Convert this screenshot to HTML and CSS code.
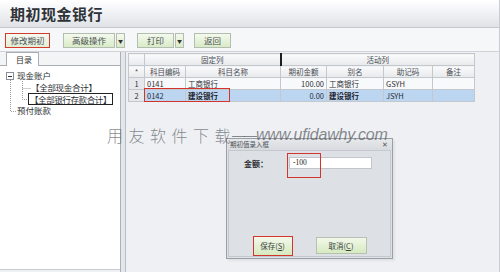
FILE: index.html
```html
<!DOCTYPE html>
<html lang="zh">
<head>
<meta charset="utf-8">
<title>期初现金银行</title>
<link rel="stylesheet" href="styles.css">
</head>
<body>
<div class="app">
  <div class="title">期初现金银行</div>
  <div class="toolbar">
    <div class="btn btn-red w-edit">修改期初</div>
    <div class="split gap-a">
      <div class="btn w-adv">高级操作</div>
      <div class="btn arrow">▼</div>
    </div>
    <div class="split gap-b">
      <div class="btn w-print">打印</div>
      <div class="btn arrow">▼</div>
    </div>
    <div class="btn w-back gap-c">返回</div>
  </div>
  <div class="main">
    <div class="side">
      <div class="tabs"><div class="tab">目录</div></div>
      <div class="tree">
        <svg class="tree-lines" width="40" height="60" viewBox="0 0 40 60">
          <g stroke="#9aa0a6" stroke-width="1" stroke-dasharray="1 1" fill="none">
            <path d="M10.5 14 V45.5 H16"/>
            <path d="M22.5 15 V33.5 H28"/>
            <path d="M22.5 22.5 H31"/>
          </g>
          <rect x="6.5" y="6.5" width="7" height="7" fill="#fff" stroke="#8a9097"/>
          <path d="M8 10.5 H12" stroke="#333"/>
        </svg>
        <div class="node lvl1">现金账户</div>
        <div class="node lvl2">【全部现金合计】</div>
        <div class="node lvl2b"><span class="focus">【全部银行存款合计】</span></div>
        <div class="node lvl1">预付账款</div>
      </div>
    </div>
    <div class="splitter"></div>
    <div class="content">
      <table class="grid">
        <colgroup>
          <col class="c-no"><col class="c-code"><col class="c-name"><col class="c-amt"><col class="c-alias"><col class="c-memo"><col class="c-note">
        </colgroup>
        <thead>
          <tr><td></td><td colspan="2">固定列</td><td colspan="4" class="divider">活动列</td></tr>
          <tr><td>*</td><td>科目编码</td><td>科目名称</td><td>期初金额</td><td>别名</td><td>助记码</td><td>备注</td></tr>
        </thead>
        <tbody>
          <tr><td class="no">1</td><td>0141</td><td>工商银行</td><td class="num">100.00</td><td>工商银行</td><td>GSYH</td><td></td></tr>
          <tr class="sel"><td class="no">2</td><td>0142</td><td class="b">建设银行</td><td class="num">0.00</td><td class="b">建设银行</td><td>JSYH</td><td></td></tr>
        </tbody>
      </table>
      <div class="mark-row"></div>
    </div>
  </div>
  <div class="dialog">
    <div class="dlg-title"><span>期初值录入框</span><span class="dlg-close">✕</span></div>
    <div class="dlg-body">
      <div class="field">
        <span class="label">金额：</span>
        <div class="input">-100</div>
        <div class="mark-input"></div>
      </div>
      <div class="dlg-buttons">
        <div class="dbtn dbtn-red">保存(<u>S</u>)</div>
        <div class="dbtn">取消(<u>C</u>)</div>
      </div>
    </div>
  </div>
  <div class="watermark"><span class="wm-cn">用友软件下载</span><span class="wm-dash">——</span><span class="wm-url">www.ufidawhy.com</span></div>
</div>
</body>
</html>
```

FILE: styles.css
```css
* { box-sizing: border-box; }
html, body { margin: 0; padding: 0; }
body {
  width: 500px;
  height: 272px;
  overflow: hidden;
  background: #eef0f4;
  font-family: "Noto Sans CJK SC", "Liberation Sans", sans-serif;
  color: #333;
}
.app {
  position: relative;
  width: 500px;
  height: 272px;
  display: flex;
  flex-direction: column;
  border-right: 1px solid #c9cdd3;
}
.title {
  height: 28px;
  padding-left: 10px;
  font-size: 15px;
  font-weight: bold;
  line-height: 27px;
  color: #2f3338;
  background: linear-gradient(#ffffff 0%, #f3f4f6 40%, #dfe2e6 100%);
  border-bottom: 1px solid #c5c9cf;
  letter-spacing: 0.5px;
}
.toolbar {
  height: 24px;
  display: flex;
  align-items: flex-start;
  padding: 5px 0 0 5px;
  background: #f6f7f9;
  border-bottom: 1px solid #cfd3d8;
}
.split { display: flex; gap: 1px; }
.btn {
  height: 15px;
  font-size: 8.5px;
  line-height: 13px;
  text-align: center;
  color: #4a4f55;
  background: linear-gradient(#f4f9ee, #d9ebc6);
  border: 1px solid #b3bdb0;
}
.btn-red { border: 1px solid #d23a2c; background: linear-gradient(#f6f9f0, #e3eed5); }
.w-edit { width: 45px; }
.w-adv { width: 52px; }
.w-print { width: 37px; }
.w-back { width: 37px; }
.arrow { width: 9px; font-size: 5px; color: #333; }
.gap-a { margin-left: 13px; }
.gap-b { margin-left: 12px; }
.gap-c { margin-left: 10px; }

.main { flex: 1; display: flex; min-height: 0; }
.side {
  width: 120px;
  display: flex;
  flex-direction: column;
  padding-bottom: 2px;
}
.tabs {
  height: 13px;
  padding-left: 6px;
  background: #f3f4f6;
}
.tab {
  width: 33px;
  height: 14px;
  font-size: 8px;
  line-height: 13px;
  padding-left: 9px;
  color: #333;
  background: #fff;
  border: 1px solid #a9aeb5;
  border-bottom: none;
  position: relative;
  z-index: 1;
}
.tree {
  position: relative;
  flex: 1;
  background: #fff;
  border-top: 1px solid #a9aeb5;
  border-bottom: 1px solid #c8ccd1;
  padding-top: 4px;
}
.tree-lines { position: absolute; left: 0; top: 0; }
.node {
  position: relative;
  height: 11.5px;
  font-size: 8.5px;
  line-height: 11px;
  color: #2c2f33;
  white-space: nowrap;
}
.lvl1 { padding-left: 17px; }
.lvl2 { padding-left: 31px; letter-spacing: -0.3px; }
.lvl2b { padding-left: 28px; letter-spacing: -0.4px; }
.focus { border: 1px solid #222; padding: 0 1px; display: inline-block; line-height: 10px; }
.splitter {
  width: 6px;
  border-left: 1px solid #aab0b7;
  border-right: 1px solid #b9bec4;
  background: #e3e6ea;
}
.content {
  position: relative;
  flex: 1;
  padding: 1px 0 0 2px;
}
.grid {
  table-layout: fixed;
  width: 346px;
  border-collapse: collapse;
  font-size: 7.5px;
  color: #2b2e33;
}
.c-no { width: 16px; }
.c-code { width: 41px; }
.c-name { width: 95px; }
.c-amt { width: 46px; }
.c-alias { width: 57px; }
.c-memo { width: 49px; }
.c-note { width: 42px; }
.grid tr { height: 12px; }
.grid td {
  border: 1px solid #c3c8ce;
  padding: 0 2px;
  line-height: 10px;
  white-space: nowrap;
  overflow: hidden;
}
.grid thead td {
  text-align: center;
  color: #4a4e54;
  background: linear-gradient(#fbfbfc, #e7e9ec);
}
.grid thead .divider { border-left: 2px solid #1e1e1e; }
.grid tbody tr { background: #f8f9fb; }
.grid tbody tr.sel { background: #bcd6f2; }
.grid td.no { text-align: center; background: #e6e8eb; }
.grid td.num { text-align: right; }
.grid td.b { font-weight: bold; color: #1d2026; }
.mark-row {
  position: absolute;
  left: 18px;
  top: 36px;
  width: 86px;
  height: 14px;
  border: 1.5px solid #d3342b;
}

.dialog {
  position: absolute;
  left: 226px;
  top: 138px;
  width: 167px;
  height: 121px;
  background: #dde0e4;
  border: 1px solid #9aa0a7;
  display: flex;
  flex-direction: column;
  box-shadow: 2px 2px 2px rgba(0,0,0,0.06);
}
.dlg-title {
  height: 11px;
  display: flex;
  justify-content: space-between;
  padding: 0 4px 0 3px;
  font-size: 6.5px;
  line-height: 11px;
  color: #4d5258;
  background: linear-gradient(#e6e8eb, #d8dbdf);
}
.dlg-close { font-size: 7px; color: #555; }
.dlg-body {
  flex: 1;
  margin: 0 1px 1px 1px;
  border: 1px solid #c5c9ce;
  display: flex;
  flex-direction: column;
  justify-content: space-between;
}
.field {
  position: relative;
  display: flex;
  align-items: center;
  margin-top: 6px;
  padding-left: 15px;
}
.label { width: 45px; font-size: 8px; font-weight: bold; color: #2c2f33; }
.input {
  width: 83px;
  height: 12px;
  background: #fff;
  border: 1px solid #c2c6cb;
  font-size: 7.5px;
  line-height: 10px;
  padding-left: 3px;
  color: #222;
  font-family: "Liberation Serif", serif;
}
.mark-input {
  position: absolute;
  left: 58px;
  top: -4px;
  width: 34px;
  height: 25px;
  border: 1.5px solid #d3342b;
}
.dlg-buttons {
  display: flex;
  justify-content: center;
  align-items: center;
  gap: 23px;
  margin-bottom: 0px;
  height: 21px;
}
.dbtn {
  width: 51px;
  height: 17px;
  font-size: 7.5px;
  line-height: 15px;
  text-align: center;
  color: #3a3f45;
  background: linear-gradient(#f2f8ea, #d6eac0);
  border: 1px solid #b7c1b1;
}
.dbtn-red { width: 40px; height: 20px; line-height: 17px; border: 1.5px solid #d3342b; }

.watermark {
  position: absolute;
  left: 107px;
  top: 124px;
  height: 22px;
  display: flex;
  align-items: center;
  color: rgba(85, 88, 92, 0.7);
  white-space: nowrap;
  pointer-events: none;
}
.wm-cn { font-size: 16px; letter-spacing: 5.5px; font-weight: 300; }
.wm-dash { font-family: "Liberation Sans", sans-serif; font-size: 13px; margin-left: -4px; letter-spacing: -1px; }
.wm-url { font-family: "Liberation Sans", sans-serif; font-style: italic; font-size: 16px; letter-spacing: -0.2px; }
```
